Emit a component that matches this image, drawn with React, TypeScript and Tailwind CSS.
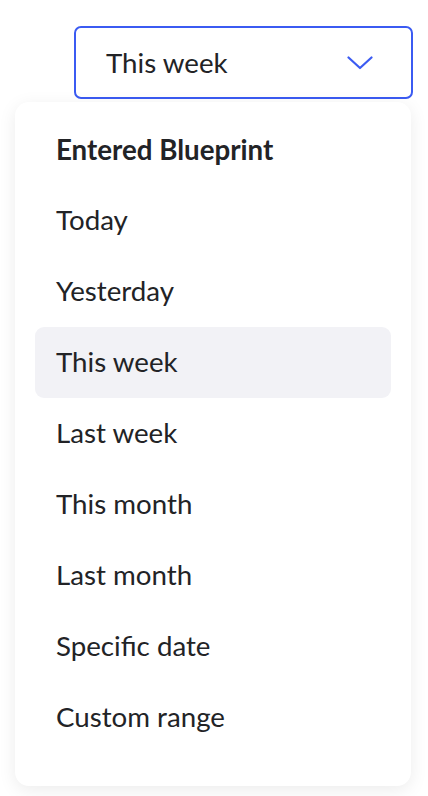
import React from 'react';

const options = [
  'Today',
  'Yesterday',
  'This week',
  'Last week',
  'This month',
  'Last month',
  'Specific date',
  'Custom range',
];

const App: React.FC = () => {
  const selected = 'This week';

  return (
    <div
      className="w-[428px] h-[796px] bg-white overflow-hidden text-[#222326]"
      style={{ fontFamily: 'Lato, "Open Sans", sans-serif' }}
    >
      {/* Trigger */}
      <div className="pt-[26px] pl-[74px]">
        <button className="w-[339px] h-[73px] flex items-center justify-between pl-[30px] pr-[38px] border-2 border-[#3b5bf2] rounded-[7px] bg-white">
          <span className="text-[27.7px] leading-none">{selected}</span>
          <svg width="26" height="14" viewBox="0 0 26 14" fill="none">
            <path d="M1.5 1.5 L13 12 L24.5 1.5" stroke="#3b5bf2" strokeWidth="2.2" strokeLinecap="round" strokeLinejoin="round" />
          </svg>
        </button>
      </div>

      {/* Menu */}
      <div className="ml-[15px] mt-[3px] w-[396px] h-[684px] bg-white rounded-[14px] shadow-[0_4px_18px_rgba(0,0,0,0.08)] px-[20px] pt-[12px]">
        <div className="h-[71px] flex items-center px-[21px] text-[27.7px] font-bold">Entered Blueprint</div>
        {options.map((opt) => (
          <div
            key={opt}
            className={`h-[71px] flex items-center px-[21px] text-[27.7px] rounded-[9px] ${opt === selected ? 'bg-[#f2f2f6]' : ''}`}
          >
            <span className="-translate-y-[1px]">{opt}</span>
          </div>
        ))}
      </div>
    </div>
  );
};

export default App;
